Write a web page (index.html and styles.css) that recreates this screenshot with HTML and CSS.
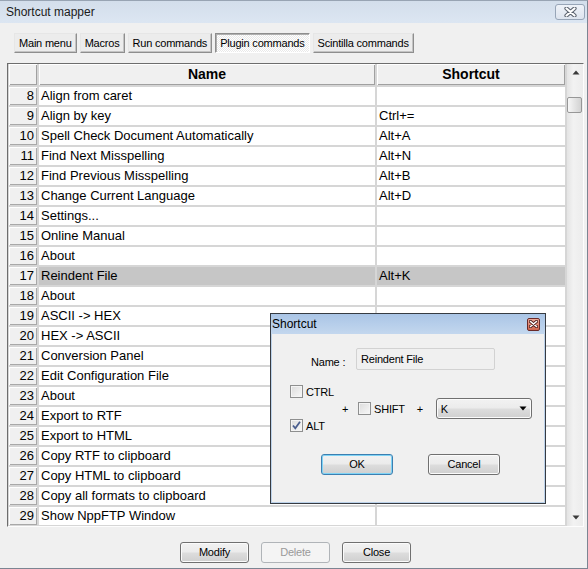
FILE: index.html
```html
<!DOCTYPE html>
<html>
<head>
<meta charset="utf-8">
<link rel="stylesheet" href="styles.css">
</head>
<body>
<div class="window">
  <div class="titlebar">
    <span class="title">Shortcut mapper</span>
    <div class="win-close">
      <svg width="13" height="10" viewBox="0 0 13 10"><path d="M2.5 1.5 L10.5 8.5 M10.5 1.5 L2.5 8.5" stroke="#58606c" stroke-width="4.2" stroke-linecap="round"/><path d="M2.5 1.5 L10.5 8.5 M10.5 1.5 L2.5 8.5" stroke="#ffffff" stroke-width="2.2" stroke-linecap="round"/></svg>
    </div>
  </div>
  <div class="client">
    <div class="tabs">
      <div class="tab">Main menu</div>
      <div class="tab">Macros</div>
      <div class="tab">Run commands</div>
      <div class="tab tab-on">Plugin commands</div>
      <div class="tab">Scintilla commands</div>
    </div>
    <div class="gridframe">
      <div class="grid">
        <div class="hcell"></div><div class="hcell">Name</div><div class="hcell">Shortcut</div>
        <div class="num">8</div><div class="cell">Align from caret</div><div class="cell"></div>
        <div class="num">9</div><div class="cell">Align by key</div><div class="cell">Ctrl+=</div>
        <div class="num">10</div><div class="cell">Spell Check Document Automatically</div><div class="cell">Alt+A</div>
        <div class="num">11</div><div class="cell">Find Next Misspelling</div><div class="cell">Alt+N</div>
        <div class="num">12</div><div class="cell">Find Previous Misspelling</div><div class="cell">Alt+B</div>
        <div class="num">13</div><div class="cell">Change Current Language</div><div class="cell">Alt+D</div>
        <div class="num">14</div><div class="cell">Settings...</div><div class="cell"></div>
        <div class="num">15</div><div class="cell">Online Manual</div><div class="cell"></div>
        <div class="num">16</div><div class="cell">About</div><div class="cell"></div>
        <div class="num">17</div><div class="cell sel">Reindent File</div><div class="cell sel">Alt+K</div>
        <div class="num">18</div><div class="cell">About</div><div class="cell"></div>
        <div class="num">19</div><div class="cell">ASCII -&gt; HEX</div><div class="cell"></div>
        <div class="num">20</div><div class="cell">HEX -&gt; ASCII</div><div class="cell"></div>
        <div class="num">21</div><div class="cell">Conversion Panel</div><div class="cell"></div>
        <div class="num">22</div><div class="cell">Edit Configuration File</div><div class="cell"></div>
        <div class="num">23</div><div class="cell">About</div><div class="cell"></div>
        <div class="num">24</div><div class="cell">Export to RTF</div><div class="cell"></div>
        <div class="num">25</div><div class="cell">Export to HTML</div><div class="cell"></div>
        <div class="num">26</div><div class="cell">Copy RTF to clipboard</div><div class="cell"></div>
        <div class="num">27</div><div class="cell">Copy HTML to clipboard</div><div class="cell"></div>
        <div class="num">28</div><div class="cell">Copy all formats to clipboard</div><div class="cell"></div>
        <div class="num">29</div><div class="cell">Show NppFTP Window</div><div class="cell"></div>
      </div>
      <div class="vscroll">
        <div class="sbtn"><svg width="8" height="5" viewBox="0 0 8 5"><path d="M4 0.5 L7.5 4.5 L0.5 4.5 Z" fill="#3a3a3a"/></svg></div>
        <div class="track"><div class="thumb"></div></div>
        <div class="sbtn"><svg width="8" height="5" viewBox="0 0 8 5"><path d="M0.5 0.5 L7.5 0.5 L4 4.5 Z" fill="#3a3a3a"/></svg></div>
      </div>
    </div>
    <div class="actions">
      <div class="btn">Modify</div>
      <div class="btn btn-off">Delete</div>
      <div class="btn">Close</div>
    </div>
  </div>

  <div class="dialog">
    <div class="dlg-title">
      <span>Shortcut</span>
      <div class="dlg-close">
        <svg width="9" height="8" viewBox="0 0 9 8"><path d="M1.5 1.5 L7.5 6.5 M7.5 1.5 L1.5 6.5" stroke="#4a2020" stroke-width="3.2" stroke-linecap="round"/><path d="M1.5 1.5 L7.5 6.5 M7.5 1.5 L1.5 6.5" stroke="#ffffff" stroke-width="1.6" stroke-linecap="round"/></svg>
      </div>
    </div>
    <div class="dlg-body">
      <div class="name-row">
        <span class="name-label">Name :</span>
        <div class="name-field">Reindent File</div>
      </div>
      <div class="mods">
        <div class="modcol">
          <div class="chk-row"><span class="chk"></span><span>CTRL</span></div>
          <div class="chk-row"><span class="chk"><svg width="11" height="11" viewBox="0 0 11 11"><path d="M2 5.5 L4.3 8.3 L9 1.8" fill="none" stroke="#4a5e8e" stroke-width="1.8"/></svg></span><span>ALT</span></div>
        </div>
        <span class="plus">+</span>
        <div class="chk-row shift"><span class="chk"></span><span>SHIFT</span></div>
        <span class="plus plus2">+</span>
        <div class="combo"><span>K</span><svg width="8" height="5" viewBox="0 0 8 5"><path d="M0.5 0.5 L7.5 0.5 L4 4.5 Z" fill="#000"/></svg></div>
      </div>
      <div class="dlg-actions">
        <div class="btn dbtn btn-default">OK</div>
        <div class="btn dbtn">Cancel</div>
      </div>
    </div>
  </div>
</div>
</body>
</html>
```

FILE: styles.css
```css
* { box-sizing: border-box; }

body {
  margin: 0;
  font-family: "Liberation Sans", Arial, sans-serif;
  font-size: 11px;
  color: #000;
  background: #f0f0f0;
}

.window {
  position: relative;
  width: 588px;
  height: 569px;
  background: #f0f0f0;
  border-top: 1px solid #98a4b3;
  border-right: 1px solid #7c8592;
  border-bottom: 1px solid #7c8592;
}

.titlebar {
  height: 22px;
  display: flex;
  justify-content: space-between;
  align-items: flex-start;
  background: linear-gradient(#d3deeb, #dce6f2);
}

.title {
  font-size: 12px;
  line-height: 22px;
  padding-left: 6px;
  color: #1b1b1b;
}

.win-close {
  margin: 3px 2px 0 0;
  width: 30px;
  height: 16px;
  border: 1px solid #97a5b7;
  border-radius: 3px;
  background: linear-gradient(#eef2f8, #dde4ee);
  display: flex;
  align-items: center;
  justify-content: center;
}

.client {
  padding-top: 10px;
}

.tabs {
  display: flex;
  gap: 3px;
  margin-left: 14px;
  height: 20px;
}

.tab {
  height: 20px;
  padding: 0 4px;
  line-height: 18px;
  letter-spacing: -0.2px;
  border: 1px solid;
  border-color: #e6e6e6 #8e8e8e #8e8e8e #e6e6e6;
  box-shadow: inset -1px -1px #c4c4c4;
  background: #ececec;
}

.tab-on {
  border-color: #8e8e8e #ffffff #ffffff #8e8e8e;
  box-shadow: inset 1px 1px #b0b0b0;
  background: repeating-conic-gradient(#ffffff 0 25%, #e9e9e9 0 50%) 0 0 / 2px 2px;
}

.gridframe {
  margin: 10px 0 0 7px;
  width: 577px;
  height: 464px;
  border: 1px solid;
  border-color: #6d6d6d #fdfdfd #fdfdfd #6d6d6d;
  display: flex;
}

.grid {
  width: 559px;
  display: grid;
  grid-template-columns: 28px 336px 188px;
  grid-template-rows: 21px;
  grid-auto-rows: 18px;
  gap: 2px;
  padding: 0 2px 1px 1px;
  background: #d6d6d6;
  font-size: 13px;
  align-content: start;
  overflow: hidden;
}

.hcell {
  background: #f0f0f0;
  box-shadow: inset 1px 1px #ffffff, inset -1px -1px #a0a0a0;
  font-weight: bold;
  font-size: 14px;
  text-align: center;
  line-height: 21px;
}

.num {
  background: #f0f0f0;
  box-shadow: inset 1px 1px #ffffff, inset -1px -1px #a8a8a8;
  text-align: right;
  padding-right: 3px;
  line-height: 18px;
}

.cell {
  background: #ffffff;
  padding-left: 2px;
  line-height: 18px;
  white-space: nowrap;
  overflow: hidden;
}

.cell.sel {
  background: #c6c6c6;
}

.vscroll {
  width: 16px;
  display: flex;
  flex-direction: column;
  background: linear-gradient(to right, #e4e4e4, #f2f2f2 40%, #ececec);
}

.sbtn {
  height: 17px;
  display: flex;
  align-items: center;
  justify-content: center;
  padding-left: 2px;
}

.track {
  flex: 1;
  padding-top: 16px;
}

.thumb {
  height: 16px;
  width: 15px;
  border: 1px solid #979797;
  border-radius: 2px;
  background: linear-gradient(to right, #f7f7f7, #e4e4e4 50%, #d2d2d2);
}

.actions {
  display: flex;
  justify-content: center;
  gap: 12px;
  margin-top: 15px;
  padding-left: 4px;
}

.btn {
  width: 69px;
  height: 21px;
  border: 1px solid #707070;
  border-radius: 3px;
  background: linear-gradient(#f2f2f2 0%, #ebebeb 48%, #dddddd 52%, #cfcfcf 100%);
  box-shadow: inset 0 0 0 1px #fbfbfb;
  text-align: center;
  line-height: 19px;
  font-size: 11px;
  letter-spacing: -0.2px;
}

.btn-off {
  border-color: #b0b4b8;
  background: #f4f4f4;
  box-shadow: none;
  color: #9a9a9a;
}

.dialog {
  position: absolute;
  left: 270px;
  top: 312px;
  width: 276px;
  height: 191px;
  border: 1px solid #363b42;
  background: #bcd2ea;
  padding: 0 1px 1px;
  display: flex;
  flex-direction: column;
}

.dlg-title {
  height: 20px;
  display: flex;
  justify-content: space-between;
  align-items: center;
  background: linear-gradient(#aac5e6, #c3d7ee);
  font-size: 12px;
  padding-left: 1px;
  margin: 0 -1px;
  padding-right: 1px;
}

.dlg-close {
  width: 13px;
  height: 13px;
  margin-right: 4px;
  border: 1px solid #6a2a28;
  border-radius: 2px;
  background: linear-gradient(#eeaa9a, #d0664f);
  display: flex;
  align-items: center;
  justify-content: center;
}

.dlg-body {
  flex: 1;
  background: #f0f0f0;
  padding-top: 14px;
  letter-spacing: -0.2px;
}

.name-row {
  display: flex;
  padding-left: 39px;
}

.name-label {
  width: 45px;
  padding-top: 8px;
}

.name-field {
  width: 139px;
  height: 22px;
  border: 1px solid #d2d2d2;
  border-radius: 2px;
  padding: 3px 4px 2px;
  line-height: 14px;
}

.mods {
  display: flex;
  align-items: center;
  margin-top: 15px;
  padding-left: 18px;
}

.modcol {
  width: 52px;
  display: flex;
  flex-direction: column;
  gap: 21px;
}

.chk-row {
  display: flex;
  align-items: center;
  gap: 3px;
  height: 13px;
}

.chk {
  width: 13px;
  height: 13px;
  border: 1px solid #8e8f8f;
  background: linear-gradient(135deg, #dcdcdc, #f8f8f8);
  box-shadow: inset 0 0 0 1px #f4f4f4;
  display: flex;
  align-items: center;
  justify-content: center;
}

.plus {
  width: 6px;
}

.shift {
  margin-left: 10px;
}

.plus2 {
  margin-left: 12px;
}

.combo {
  margin-left: 13px;
  width: 96px;
  height: 21px;
  border: 1px solid #707070;
  border-radius: 3px;
  background: linear-gradient(#f2f2f2 0%, #ebebeb 48%, #dddddd 52%, #cfcfcf 100%);
  box-shadow: inset 0 0 0 1px #fbfbfb;
  display: flex;
  align-items: center;
  justify-content: space-between;
  padding: 0 4px 0 4px;
}

.dlg-actions {
  display: flex;
  gap: 35px;
  margin-top: 22px;
  padding-left: 49px;
}

.dbtn {
  width: 72px;
}

.btn-default {
  border-color: #3c7fb1;
  box-shadow: inset 0 0 0 1px #7fd3f5;
}
```
